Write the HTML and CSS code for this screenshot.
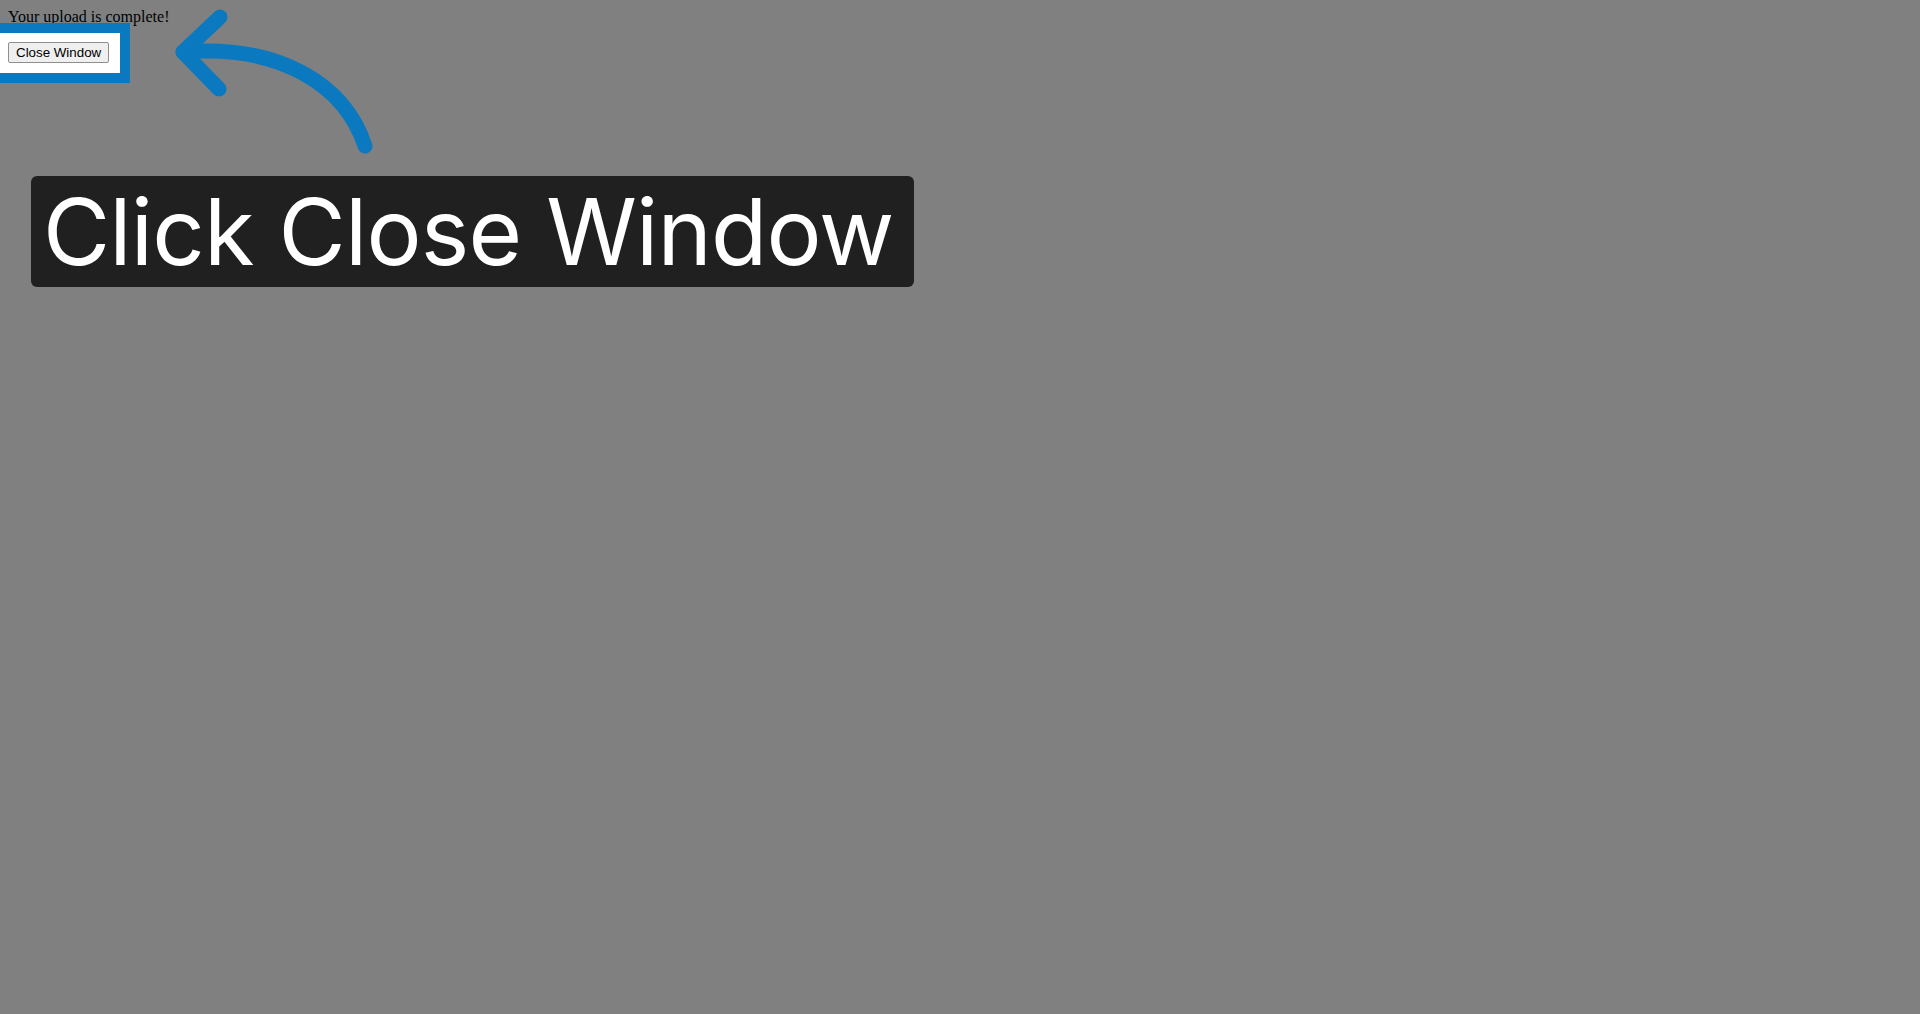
FILE: index.html
```html
<!DOCTYPE html>
<html>
<head>
<meta charset="utf-8">
<title>Upload complete</title>
<link rel="stylesheet" href="styles.css">
</head>
<body>
<p class="message">Your upload is complete!</p>
<div class="actions">
  <div class="highlight"></div>
  <button class="close-btn" type="button">Close Window</button>
</div>
<svg class="pointer" width="400" height="170" viewBox="0 0 400 170" aria-hidden="true">
  <path d="M183 52 C280 44 345 85 365 146" fill="none" stroke="#0a79bf" stroke-width="15" stroke-linecap="round"/>
  <path d="M220 17 L183 52 L219 89" fill="none" stroke="#0a79bf" stroke-width="15" stroke-linecap="round" stroke-linejoin="round"/>
</svg>
<div class="callout">Click Close Window</div>
</body>
</html>
```
FILE: styles.css
```css
html {
  height: 100%;
}
body {
  box-sizing: border-box;
  margin: 0;
  padding: 8px;
  min-height: 100%;
  background: #808080;
  font-family: "Liberation Serif", "Times New Roman", serif;
  font-size: 16px;
  color: #000;
}
.message {
  margin: 0 0 16px;
}
.actions {
  position: relative;
}
.highlight {
  position: absolute;
  left: -30px;
  top: -19px;
  width: 132px;
  height: 40px;
  border: 10px solid #0a79bf;
  background: #fff;
  z-index: 1;
}
.close-btn {
  position: relative;
  z-index: 2;
  font-family: "Liberation Sans", Arial, sans-serif;
  font-size: 13.333px;
  padding: 1px 7px;
  background: #efefef;
  color: #000;
  border: 1px solid #8f8f8f;
  border-radius: 2px;
  height: 21px;
}
.pointer {
  position: absolute;
  left: 0;
  top: 0;
  z-index: 3;
}
.callout {
  position: absolute;
  left: 31px;
  top: 176px;
  padding: 0 20px 0 12px;
  background: #202020;
  color: #fff;
  border-radius: 6px;
  font-family: Inter, "Liberation Sans", sans-serif;
  font-size: 92px;
  letter-spacing: -0.85px;
  line-height: normal;
  white-space: nowrap;
  z-index: 3;
}
```
